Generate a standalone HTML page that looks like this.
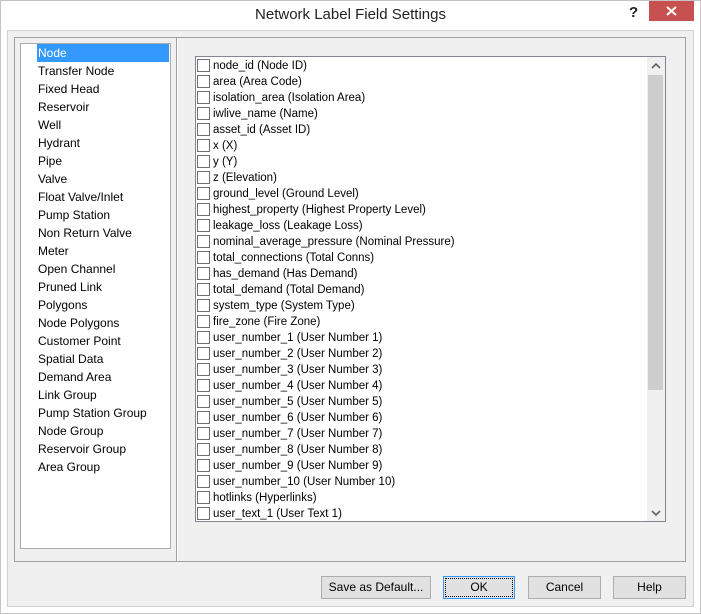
<!DOCTYPE html>
<html><head><style>
*{margin:0;padding:0;box-sizing:border-box}
body{width:701px;height:614px;background:#fff;font-family:"Liberation Sans",sans-serif;font-size:12px;color:#000;position:relative;overflow:hidden}
.abs{position:absolute}
#win{left:0;top:0;width:701px;height:614px;border:1px solid #c4c4c4;background:#fff}
#title{left:0;top:6px;width:701px;text-align:center;font-size:15px;color:#222}
#q{left:629px;top:4px;font-size:15px;font-weight:bold;color:#222}
#close{left:649px;top:1px;width:45px;height:20px;background:#c75050}
#body{left:7px;top:30px;width:687px;height:577px;background:#f0f0f0;border:1px solid #d0d0d0}
#frame{left:14px;top:37px;width:672px;height:525px;border:1px solid #a0a0a0}
#left{left:20px;top:43px;width:151px;height:506px;background:#fff;border:1px solid #aaa}
#sep{left:176px;top:38px;height:523px;border-left:1px solid #a0a0a0;background:#fff;width:2px}
.li{position:absolute;left:16px;height:18px;line-height:19px;padding-left:1px;white-space:nowrap}
.sel{background:#3399ff;color:#fff;width:132px}
#list{left:195px;top:56px;width:471px;height:466px;background:#fff;border:1px solid #828790;font-size:11.5px}
.row{position:absolute;left:1px;height:16px;line-height:16px;white-space:nowrap}
.cb{position:absolute;left:0;top:1px;width:13px;height:13px;border:1px solid #707070;background:#fff}
.row span{position:absolute;left:16px;top:0}
#sb{left:647px;top:57px;width:18px;height:464px;background:#f0f0f0}
#thumb{left:648px;top:75px;width:15px;height:315px;background:#cdcdcd}
.btn{position:absolute;top:576px;height:23px;background:#e1e1e1;border:1px solid #adadad;text-align:center;line-height:21px}
</style></head><body>
<div id="win" class="abs"></div>
<div id="title" class="abs">Network Label Field Settings</div>
<div id="q" class="abs">?</div>
<div id="close" class="abs"><svg width="45" height="20"><path d="M18 6 L27 14 M27 6 L18 14" stroke="#fff" stroke-width="2"/></svg></div>
<div id="body" class="abs"></div>
<div id="frame" class="abs"></div>
<div id="sep" class="abs"></div>
<div id="left" class="abs">
<div class="li sel" style="top:0">Node</div>
<div class="li" style="top:18px">Transfer Node</div>
<div class="li" style="top:36px">Fixed Head</div>
<div class="li" style="top:54px">Reservoir</div>
<div class="li" style="top:72px">Well</div>
<div class="li" style="top:90px">Hydrant</div>
<div class="li" style="top:108px">Pipe</div>
<div class="li" style="top:126px">Valve</div>
<div class="li" style="top:144px">Float Valve/Inlet</div>
<div class="li" style="top:162px">Pump Station</div>
<div class="li" style="top:180px">Non Return Valve</div>
<div class="li" style="top:198px">Meter</div>
<div class="li" style="top:216px">Open Channel</div>
<div class="li" style="top:234px">Pruned Link</div>
<div class="li" style="top:252px">Polygons</div>
<div class="li" style="top:270px">Node Polygons</div>
<div class="li" style="top:288px">Customer Point</div>
<div class="li" style="top:306px">Spatial Data</div>
<div class="li" style="top:324px">Demand Area</div>
<div class="li" style="top:342px">Link Group</div>
<div class="li" style="top:360px">Pump Station Group</div>
<div class="li" style="top:378px">Node Group</div>
<div class="li" style="top:396px">Reservoir Group</div>
<div class="li" style="top:414px">Area Group</div>
</div>
<div id="list" class="abs">
<div class="row" style="top:1px"><div class="cb"></div><span>node_id (Node ID)</span></div>
<div class="row" style="top:17px"><div class="cb"></div><span>area (Area Code)</span></div>
<div class="row" style="top:33px"><div class="cb"></div><span>isolation_area (Isolation Area)</span></div>
<div class="row" style="top:49px"><div class="cb"></div><span>iwlive_name (Name)</span></div>
<div class="row" style="top:65px"><div class="cb"></div><span>asset_id (Asset ID)</span></div>
<div class="row" style="top:81px"><div class="cb"></div><span>x (X)</span></div>
<div class="row" style="top:97px"><div class="cb"></div><span>y (Y)</span></div>
<div class="row" style="top:113px"><div class="cb"></div><span>z (Elevation)</span></div>
<div class="row" style="top:129px"><div class="cb"></div><span>ground_level (Ground Level)</span></div>
<div class="row" style="top:145px"><div class="cb"></div><span>highest_property (Highest Property Level)</span></div>
<div class="row" style="top:161px"><div class="cb"></div><span>leakage_loss (Leakage Loss)</span></div>
<div class="row" style="top:177px"><div class="cb"></div><span>nominal_average_pressure (Nominal Pressure)</span></div>
<div class="row" style="top:193px"><div class="cb"></div><span>total_connections (Total Conns)</span></div>
<div class="row" style="top:209px"><div class="cb"></div><span>has_demand (Has Demand)</span></div>
<div class="row" style="top:225px"><div class="cb"></div><span>total_demand (Total Demand)</span></div>
<div class="row" style="top:241px"><div class="cb"></div><span>system_type (System Type)</span></div>
<div class="row" style="top:257px"><div class="cb"></div><span>fire_zone (Fire Zone)</span></div>
<div class="row" style="top:273px"><div class="cb"></div><span>user_number_1 (User Number 1)</span></div>
<div class="row" style="top:289px"><div class="cb"></div><span>user_number_2 (User Number 2)</span></div>
<div class="row" style="top:305px"><div class="cb"></div><span>user_number_3 (User Number 3)</span></div>
<div class="row" style="top:321px"><div class="cb"></div><span>user_number_4 (User Number 4)</span></div>
<div class="row" style="top:337px"><div class="cb"></div><span>user_number_5 (User Number 5)</span></div>
<div class="row" style="top:353px"><div class="cb"></div><span>user_number_6 (User Number 6)</span></div>
<div class="row" style="top:369px"><div class="cb"></div><span>user_number_7 (User Number 7)</span></div>
<div class="row" style="top:385px"><div class="cb"></div><span>user_number_8 (User Number 8)</span></div>
<div class="row" style="top:401px"><div class="cb"></div><span>user_number_9 (User Number 9)</span></div>
<div class="row" style="top:417px"><div class="cb"></div><span>user_number_10 (User Number 10)</span></div>
<div class="row" style="top:433px"><div class="cb"></div><span>hotlinks (Hyperlinks)</span></div>
<div class="row" style="top:449px"><div class="cb"></div><span>user_text_1 (User Text 1)</span></div>
</div>
<div id="sb" class="abs"></div>
<div id="thumb" class="abs"></div>
<svg class="abs" style="left:651px;top:62px" width="10" height="8"><path d="M1 6 L5 2 L9 6" fill="none" stroke="#606060" stroke-width="1.6"/></svg>
<svg class="abs" style="left:651px;top:509px" width="10" height="8"><path d="M1 2 L5 6 L9 2" fill="none" stroke="#606060" stroke-width="1.6"/></svg>
<div class="btn" style="left:321px;width:110px">Save as Default...</div>
<div class="btn" style="left:443px;width:72px;border-color:#3399ff;outline:1px dotted #000;outline-offset:-3px">OK</div>
<div class="btn" style="left:528px;width:73px">Cancel</div>
<div class="btn" style="left:613px;width:73px">Help</div>
</body></html>
